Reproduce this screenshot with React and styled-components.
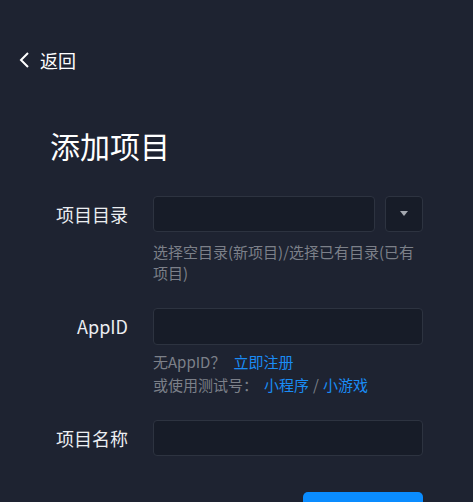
import React from "react";
import styled, { createGlobalStyle } from "styled-components";

const Global = createGlobalStyle`
  html, body { margin: 0; padding: 0; overflow: hidden; background: #1e2331; }
  body { font-family: "Noto Sans CJK SC", "Noto Sans", sans-serif; color: #e6e8ec; }
  * { box-sizing: border-box; }
`;

const Page = styled.div`
  height: 502px;
  background: #1e2331;
  overflow: hidden;
`;

const Header = styled.div`
  padding: 48px 0 0 18px;
  height: 72px;
`;

const Back = styled.a`
  display: inline-flex;
  align-items: center;
  gap: 9px;
  color: #ffffff;
  font-size: 18px;
  line-height: 24px;
  cursor: pointer;
`;

const Content = styled.div`
  padding: 0 50px;
`;

const Title = styled.h1`
  margin: 53px 0 31px;
  font-size: 30px;
  line-height: 40px;
  font-weight: 400;
  color: #ffffff;
`;

const Row = styled.div`
  display: grid;
  grid-template-columns: 78px 1fr;
  column-gap: 25px;
  margin-bottom: ${(p) => p.$mb || 25}px;
`;

const Label = styled.div`
  text-align: right;
  font-size: 18px;
  line-height: 36px;
  color: #eceef1;
  white-space: nowrap;
`;

const Field = styled.div`
  display: flex;
  flex-direction: column;
`;

const InputLine = styled.div`
  display: flex;
  gap: 10px;
`;

const Input = styled.input`
  flex: 1;
  min-width: 0;
  height: ${(p) => p.$h || 36}px;
  background: #171c28;
  border: 1px solid #2d3340;
  border-radius: 4px;
  color: #fff;
  padding: 0 10px;
  font-size: 14px;
  outline: none;
`;

const DropButton = styled.button`
  width: 38px;
  height: 36px;
  background: #171c28;
  border: 1px solid #2d3340;
  border-radius: 4px;
  display: flex;
  align-items: center;
  justify-content: center;
  padding: 0;
`;

const Hint = styled.div`
  margin-top: ${(p) => p.$mt || 0}px;
  font-size: 15px;
  line-height: ${(p) => p.$lh || 21}px;
  color: #7c8089;
`;

const Link = styled.a`
  color: #1a8cf5;
  margin-left: ${(p) => p.$ml || 0}px;
  cursor: pointer;
`;

const Slash = styled.span`
  color: #7c8089;
  margin: 0 4px;
`;

const Actions = styled.div`
  display: flex;
  justify-content: flex-end;
  margin-top: 36px;
`;

const Primary = styled.button`
  width: 120px;
  height: 36px;
  background: #0a8cff;
  border: none;
  border-radius: 5px;
`;

export default function App() {
  return (
    <Page>
      <Global />
      <Header>
        <Back>
          <svg width="13" height="16" viewBox="0 0 13 16" fill="none">
            <path d="M10 1 L3 8 L10 15" stroke="#fff" strokeWidth="2" />
          </svg>
          返回
        </Back>
      </Header>
      <Content>
        <Title>添加项目</Title>
        <Row>
          <Label>项目目录</Label>
          <Field>
            <InputLine>
              <Input />
              <DropButton>
                <svg width="8" height="6" viewBox="0 0 8 6">
                  <path d="M0 0 H8 L4 5 Z" fill="#a4a8b0" />
                </svg>
              </DropButton>
            </InputLine>
            <Hint $mt={9}>选择空目录(新项目)/选择已有目录(已有项目)</Hint>
          </Field>
        </Row>
        <Row $mb={24}>
          <Label>AppID</Label>
          <Field>
            <InputLine>
              <Input $h={37} />
            </InputLine>
            <Hint $mt={6} $lh={22}>
              无AppID？<Link $ml={8}>立即注册</Link>
            </Hint>
            <Hint $mt={1} $lh={22}>
              或使用测试号：<Link $ml={6}>小程序</Link>
              <Slash>/</Slash>
              <Link>小游戏</Link>
            </Hint>
          </Field>
        </Row>
        <Row $mb={0}>
          <Label>项目名称</Label>
          <Field>
            <InputLine>
              <Input />
            </InputLine>
          </Field>
        </Row>
        <Actions>
          <Primary aria-label="确定" />
        </Actions>
      </Content>
    </Page>
  );
}
